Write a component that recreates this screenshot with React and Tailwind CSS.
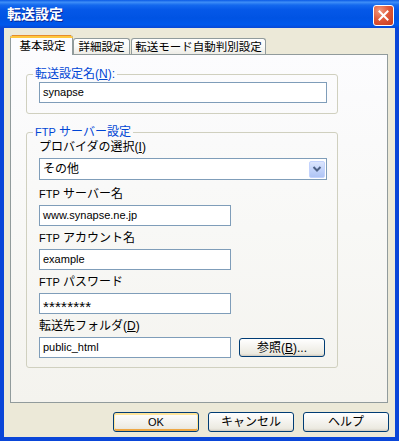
const U = ({ children }) => (
  <span className="underline underline-offset-[1px]">{children}</span>
);

const L = ({ children }) => <span className="text-[11px]">{children}</span>;

function TextBox({ value, w = "w-[288px]", cls = "" }) {
  return (
    <div
      className={`${w} h-[21px] shrink-0 border border-[#7F9DB9] bg-white flex items-center pl-[3px] text-[11px] leading-[19px] overflow-hidden whitespace-nowrap ${cls}`}
    >
      {value}
    </div>
  );
}

function Label({ children, cls = "mt-[5px]" }) {
  return (
    <div className={`h-[14px] leading-[14px] whitespace-nowrap ${cls}`}>{children}</div>
  );
}

function XPButton({ children, w = "w-[86px]", h = "h-[20px]", def = false }) {
  return (
    <div
      className={`${w} ${h} shrink-0 rounded-[3px] border border-[#003C74] bg-[linear-gradient(to_bottom,#FFFFFF_0%,#F6F5F1_40%,#ECEAE1_85%,#D8D2C6_100%)] flex items-center justify-center leading-[14px] whitespace-nowrap ${
        def ? "shadow-[inset_0_1px_0_1px_#FFE59A,inset_0_-1px_0_1px_#EFA743]" : "shadow-[inset_0_-1px_0_0_#D6D0C5]"
      }`}
    >
      {children}
    </div>
  );
}

function Tab({ children, selected, w }) {
  if (selected) {
    return (
      <div
        className={`${w} h-[20px] mb-[-1px] relative z-10 shrink-0 rounded-t-[3px] border-x border-[#919B9C] bg-[#FCFCFE] flex flex-col`}
      >
        <div className="h-[1px] mx-[1px] bg-[#E68B2C]" />
        <div className="h-[2px] bg-[#FFC73C] mx-[-1px] rounded-t-[2px]" />
        <div className="flex-1 flex items-center justify-center leading-[14px] pb-[1px] pl-[2px] text-[11.5px]">
          {children}
        </div>
      </div>
    );
  }
  return (
    <div
      className={`${w} h-[16px] shrink-0 rounded-t-[3px] border border-b-0 border-[#919B9C] bg-[linear-gradient(to_bottom,#FFFFFF_0%,#FAFAF8_50%,#EDECE6_100%)] flex items-center justify-center leading-[14px] text-[11.5px]`}
    >
      {children}
    </div>
  );
}

export default function App() {
  return (
    <div className="w-[399px] h-[441px] flex flex-col bg-[#0A46D8] overflow-hidden text-[12px] text-black [font-family:'Liberation_Sans','Noto_Sans_CJK_JP',sans-serif]">
      {/* Title bar */}
      <div className="h-[28px] shrink-0 flex items-start pl-[7px] pr-[5px] bg-[linear-gradient(to_bottom,#0A5AE6_0%,#3E8EF7_8%,#1469EE_18%,#0558E8_35%,#0053E3_65%,#0058EC_88%,#0848D6_100%)]">
        <span className="mt-[6px] text-white font-bold text-[14px] leading-[16px] [text-shadow:1px_1px_0_#0A2A9A]">
          転送設定
        </span>
        <div className="ml-auto mt-[5px] w-[21px] h-[21px] rounded-[3px] border border-white bg-[radial-gradient(circle_at_30%_25%,#F29A7E_0%,#E05A3A_45%,#C73A1E_100%)] flex items-center justify-center">
          <svg width="11" height="11" viewBox="0 0 11 11">
            <path
              d="M1.5 1.5 L9.5 9.5 M9.5 1.5 L1.5 9.5"
              stroke="white"
              strokeWidth="2"
              strokeLinecap="square"
              fill="none"
            />
          </svg>
        </div>
      </div>

      {/* Body */}
      <div className="flex-1 mx-[4px] mb-[4px] bg-[#ECE9D8] flex flex-col">
        {/* Tabs */}
        <div className="mt-[7px] ml-[6px] h-[19px] flex items-end">
          <Tab selected w="w-[63px]">基本設定</Tab>
          <Tab w="w-[57px]">詳細設定</Tab>
          <div className="w-[1px] shrink-0" />
          <Tab w="w-[135px]">転送モード自動判別設定</Tab>
        </div>

        {/* Panel */}
        <div className="ml-[6px] w-[378px] h-[349px] shrink-0 border border-[#919B9C] bg-[linear-gradient(to_bottom,#FCFCFE_0%,#F8F8F6_50%,#F4F3EE_100%)] pt-[12px] pl-[15px]">
          {/* Group 1 */}
          <fieldset className="w-[312px] border border-[#D0D0BF] rounded-[3px] pl-[6px] pb-[10px]">
            <legend className="px-[2px] leading-[14px] h-[14px] text-[#0046D5] whitespace-nowrap">
              転送設定名(<U>N</U>):
            </legend>
            <div className="pl-[6px] pt-[1px]">
              <TextBox value="synapse" />
            </div>
          </fieldset>

          {/* Group 2 */}
          <fieldset className="mt-[11px] w-[312px] border border-[#D0D0BF] rounded-[3px] pl-[6px] pb-[9px]">
            <legend className="px-[2px] leading-[14px] h-[14px] text-[#0046D5] whitespace-nowrap">
              <L>FTP</L> サーバー設定
            </legend>
            <div className="pl-[6px] flex flex-col">
              <Label cls="mt-[1px]">
                プロバイダの選択(<U>I</U>)
              </Label>
              <div className="mt-[4px] w-[288px] h-[22px] shrink-0 border border-[#7F9DB9] bg-white flex items-center">
                <div className="flex-1 pl-[3px] leading-[14px]">その他</div>
                <div className="w-[16px] h-[17px] mr-[1px] rounded-[2px] border border-[#C3D3FD] bg-[linear-gradient(to_bottom,#DCE6FD_0%,#C3D4FB_50%,#AFC4F4_100%)] flex items-center justify-center">
                  <svg width="10" height="8" viewBox="0 0 10 8">
                    <path
                      d="M1.5 2 L5 5.5 L8.5 2"
                      stroke="#4D6185"
                      strokeWidth="2"
                      fill="none"
                    />
                  </svg>
                </div>
              </div>

              <Label cls="mt-[7px]">
                <L>FTP</L> サーバー名
              </Label>
              <TextBox value="www.synapse.ne.jp" w="w-[192px]" cls="mt-[4px]" />

              <Label>
                <L>FTP</L> アカウント名
              </Label>
              <TextBox value="example" w="w-[192px]" cls="mt-[4px]" />

              <Label>
                <L>FTP</L> パスワード
              </Label>
              <TextBox
                value={
                  <span className="text-[15px] leading-[15px] tracking-[0.2px] translate-y-[3px]">
                    ********
                  </span>
                }
                w="w-[192px]"
                cls="mt-[4px]"
              />

              <Label>
                転送先フォルダ(<U>D</U>)
              </Label>
              <div className="mt-[4px] flex items-center gap-[8px]">
                <TextBox value="public_html" w="w-[192px]" />
                <XPButton w="w-[86px]" h="h-[19px]">
                  参照(<U>B</U>)...
                </XPButton>
              </div>
            </div>
          </fieldset>
        </div>

        {/* Buttons */}
        <div className="mt-[9px] flex justify-end gap-[9px] pr-[6px]">
          <XPButton def>
            <L>OK</L>
          </XPButton>
          <XPButton>キャンセル</XPButton>
          <XPButton>ヘルプ</XPButton>
        </div>
      </div>
    </div>
  );
}
